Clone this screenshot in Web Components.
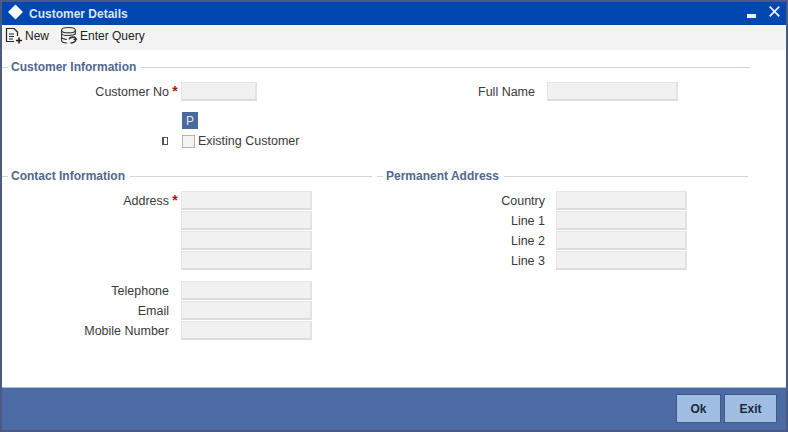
<!DOCTYPE html>
<html>
<head>
<meta charset="utf-8">
<title>Customer Details</title>
<style>
html,body{margin:0;padding:0;background:#4b5a80;}
body{width:788px;height:432px;overflow:hidden;font-family:"Liberation Sans",Arial,sans-serif;}
</style>
</head>
<body>
<fc-window>
  <fc-titlebar slot="title">Customer Details</fc-titlebar>
  <fc-toolbar slot="tools"></fc-toolbar>

  <fc-section style="--line-width:748px">Customer Information</fc-section>
  <fc-customer></fc-customer>
  <fc-contact></fc-contact>

  <fc-footer slot="footer"></fc-footer>
</fc-window>

<script>
function define(name,css,html){
    customElements.define(name,class extends HTMLElement{
        constructor(){
            super()
            this.attachShadow({mode:'open'}).innerHTML=`<style>${css}</style>${html}`
        }
    })
}

define('fc-window',`
    :host{display:flex;flex-direction:column;width:784px;height:428px;margin:0 2px 2px 2px;padding-top:2px;}
    .body{flex:1;background:#fff;}
`,`
    <slot name="title"></slot>
    <slot name="tools"></slot>
    <div class="body"><slot></slot></div>
    <slot name="footer"></slot>
`)

define('fc-titlebar',`
    :host{display:flex;align-items:center;height:23px;background:#0047b1;color:#d9e6f7;font-weight:bold;font-size:12px;flex:none;}
    svg{display:block;}
    .logo{margin:0 5px 3px 5px;}
    .text{flex:1;}
    .min{margin-right:13px;margin-top:5px;}
    .close{margin-right:6px;margin-bottom:4px;}
`,`
    <svg class="logo" width="17" height="16" viewBox="0 0 17 16"><path d="M9.5 1 16.5 8 9.5 15Z" fill="#0a2c6e"/><path d="M8.5 0.5 16 8 8.5 15.5 1 8Z" fill="#fff"/></svg>
    <span class="text"><slot></slot></span>
    <svg class="min" width="9" height="5" viewBox="0 0 9 5"><rect width="9" height="4" fill="#e8f0fa"/></svg>
    <svg class="close" width="11" height="11" viewBox="0 0 11 11"><path d="M.7.7 10.3 10.3M10.3.7 .7 10.3" stroke="#f2f6fc" stroke-width="1.7" fill="none"/></svg>
`)

define('fc-toolbar',`
    :host{display:flex;align-items:center;height:25px;background:#f4f4f4;font-size:12px;color:#222;flex:none;padding:0 0 4px 3px;box-sizing:border-box;}
    svg{display:block;}
    span{margin:0 10px 0 2px;}
    .new{width:25px;}
`,`
    <svg width="18" height="17" viewBox="0 0 18 17" fill="none" stroke="#222" stroke-width="1.2">
      <path d="M9 1.5H1.5V14.5H9M9 1.5 12.5 5V9"/>
      <path d="M4 7H9M4 9.5H9M4 12H8"/>
      <path d="M11 13.5H17M14 10.5V16.5" stroke-width="1.6"/>
    </svg>
    <span class="new">New</span>
    <svg width="18" height="17" viewBox="1.5 0.5 15 16" fill="none" stroke="#333" stroke-width="1">
      <ellipse cx="8.5" cy="3.5" rx="6.5" ry="2.5"/>
      <path d="M2 3.5V13C2 14.5 4.5 15.5 7 15.5M15 3.5V7.5"/>
      <path d="M2 7C3 8.8 13 9 15 7M2 10.5C3 11.8 5 12 7 12.2"/>
      <path d="M9 12C10 9.5 14 9.5 15.5 11.5 15.5 14 13 15.5 10.5 15.5" stroke-width="1.5"/>
      <path d="M14 9.5 16 12 13.2 12.2"/>
    </svg>
    <span>Enter Query</span>
`)

define('fc-section',`
    :host{display:flex;align-items:center;width:var(--line-width,370px);height:16px;font-size:12px;font-weight:bold;color:#52688f;margin-top:9px;flex:none;}
    :host::before{content:"";width:6px;border-top:1px solid #cfd6e0;margin-right:3px;}
    :host::after{content:"";flex:1;border-top:1px solid #cfd6e0;margin-left:5px;}
`,`<slot></slot>`)

define('fc-input',`
    :host{display:block;background:#f1f1f1;border:1px solid #e6e6e6;border-bottom:2px solid #dcdcdc;border-right:2px solid #e3e3e3;height:16px;width:calc(var(--w,131px) - 3px);}
`,``)

define('fc-field',`
    :host{display:flex;align-items:center;height:20px;font-size:12.5px;color:#3a3a3a;}
    .label{width:var(--label,167px);text-align:right;flex:none;padding-top:2px;}
    .star{width:var(--star,12px);text-align:center;color:#a8161c;font-weight:bold;flex:none;font-size:14px;line-height:12px;}
`,`
    <span class="label"><slot name="label"></slot></span>
    <span class="star"><slot name="star"></slot></span>
    <slot></slot>
`)

define('fc-customer',`
    :host{display:block;}
    .top{display:flex;margin-top:6px;}
    .p{display:flex;width:16px;height:17px;margin:11px 0 0 180px;background:#4a6a9c;color:#dfe7f2;font-size:12px;align-items:center;justify-content:center;}
    .check{display:flex;align-items:center;height:18px;margin-top:3px;font-size:12.5px;color:#3a3a3a;}
    .glyph{width:3px;height:6px;border:1px solid #555;border-left-width:2px;margin-left:160px;margin-right:14px;}
    .box{width:11px;height:11px;border:1px solid #b5b5b5;background:#f4f4f4;margin-right:3px;}
`,`
    <div class="top">
      <fc-field><span slot="label">Customer No</span><span slot="star">*</span><fc-input style="--w:76px"></fc-input></fc-field>
      <fc-field style="--label:278px"><span slot="label">Full Name</span><fc-input style="--w:131px"></fc-input></fc-field>
    </div>
    <div class="p">P</div>
    <div class="check"><span class="glyph"></span><span class="box"></span><span>Existing Customer</span></div>
`)

define('fc-contact',`
    :host{display:grid;grid-template-columns:372px 1fr;margin-top:18px;}
    .right{padding-left:3px;}
    .rows{margin-top:6px;}
    .gap{height:10px;}
    .rows.addr{--label:168px;--star:11px;}
`,`
    <div>
      <fc-section style="--line-width:370px;margin-top:0">Contact Information</fc-section>
      <div class="rows">
        <fc-field><span slot="label">Address</span><span slot="star">*</span><fc-input></fc-input></fc-field>
        <fc-field><span slot="label"></span><fc-input></fc-input></fc-field>
        <fc-field><span slot="label"></span><fc-input></fc-input></fc-field>
        <fc-field><span slot="label"></span><fc-input></fc-input></fc-field>
        <div class="gap"></div>
        <fc-field><span slot="label">Telephone</span><fc-input></fc-input></fc-field>
        <fc-field><span slot="label">Email</span><fc-input></fc-input></fc-field>
        <fc-field><span slot="label">Mobile Number</span><fc-input></fc-input></fc-field>
      </div>
    </div>
    <div class="right">
      <fc-section style="--line-width:371px;margin-top:0">Permanent Address</fc-section>
      <div class="rows addr">
        <fc-field><span slot="label">Country</span><fc-input></fc-input></fc-field>
        <fc-field><span slot="label">Line 1</span><fc-input></fc-input></fc-field>
        <fc-field><span slot="label">Line 2</span><fc-input></fc-input></fc-field>
        <fc-field><span slot="label">Line 3</span><fc-input></fc-input></fc-field>
      </div>
    </div>
`)

define('fc-footer',`
    :host{display:flex;justify-content:flex-end;align-items:center;gap:3px;height:43px;background:#4c6aa3;border-top:1px solid #a9bcd8;box-sizing:border-box;flex:none;padding:0 9px 1px 0;}
    button{height:29px;border:1px solid #44597f;background:#a0bde2;font:bold 12px "Liberation Sans",Arial,sans-serif;color:#1c2a40;padding:0;}
    .ok{width:45px;}
    .exit{width:53px;}
`,`
    <button class="ok">Ok</button>
    <button class="exit">Exit</button>
`)
</script>
</body>
</html>
